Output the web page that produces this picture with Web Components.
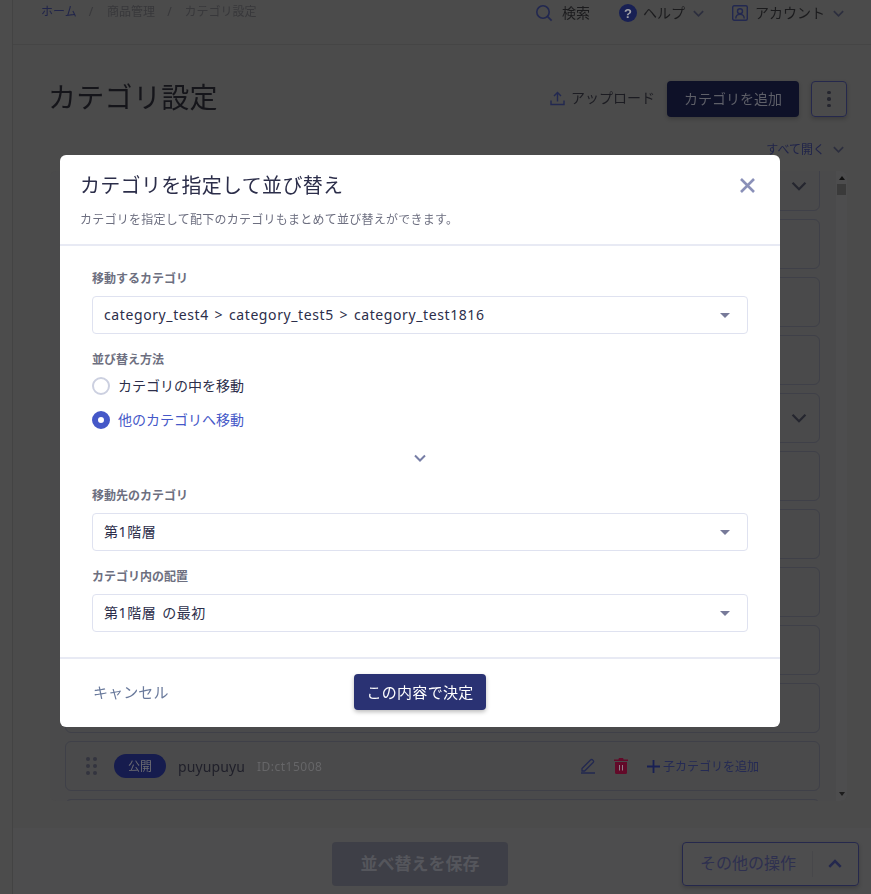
<!DOCTYPE html>
<html lang="ja"><head><meta charset="utf-8"><title>カテゴリ設定</title>
<style>
html,body{margin:0;height:100%;overflow:hidden}
body{font-family:"Noto Sans","Noto Sans CJK JP",sans-serif;background:#4b4b4b;color:#2c2e4a}
</style></head><body>
<app-shell></app-shell>
<sort-modal></sort-modal>
<script>
const chev=(s=14,c='currentColor',w=1.8)=>`<svg width="${s}" height="${s}" viewBox="0 0 14 14" fill="none" stroke="${c}" stroke-width="${w}"><path d="M2 4.5l5 5 5-5"/></svg>`;
function def(name,css,html){
  customElements.define(name,class extends HTMLElement{
    connectedCallback(){
      if(this.shadowRoot)return;
      const r=this.attachShadow({mode:'open'});
      r.innerHTML=`<style>${css}</style>`+(typeof html==='function'?html(this):html);
    }
  });
}
def('top-bar',`:host{display:flex;justify-content:space-between;align-items:flex-start;height:45px;box-sizing:border-box;border-bottom:1px solid #454545;padding:1px 26px 0 28px;font-size:12px;line-height:20px;color:#38383b}
.crumb{display:flex;margin-top:1px}.crumb .s{margin:0 14px 0 12px}.crumb .s2{margin-right:13px}.home{color:#20244a}
.r{display:flex;align-items:center;font-size:14px;color:#1b1b1d;height:24px}
.i{display:flex;align-items:center}
svg{display:block}`,`
<div class="crumb"><span class="home">ホーム</span><span class="s">/</span><span>商品管理</span><span class="s s2">/</span><span>カテゴリ設定</span></div>
<div class="r">
<span class="i" style="gap:9px;margin-right:29px"><svg width="18" height="18" viewBox="0 0 18 18" fill="none" stroke="#222850" stroke-width="1.6"><circle cx="8" cy="8" r="6.2"/><path d="M12.6 12.6l4 4"/></svg>検索</span>
<span class="i" style="gap:6px;margin-right:27px"><svg width="18" height="18" viewBox="0 0 18 18"><circle cx="9" cy="9" r="9" fill="#182054"/><text x="9" y="13.500" text-anchor="middle" font-size="13" font-weight="700" font-family="Liberation Sans" fill="#a0a0a6">?</text></svg>ヘルプ<span style="margin-left:1px;color:#2c2e3e">${chev(13)}</span></span>
<span class="i" style="gap:7px"><svg width="16" height="16" viewBox="0 0 16 16" fill="none" stroke="#222850" stroke-width="1.400"><rect x=".7" y=".7" width="14.600" height="14.600" rx="1.500"/><circle cx="8" cy="6.300" r="2.500"/><path d="M3.800 13.500c0-5.500 8.400-5.500 8.400 0"/></svg>アカウント<span style="color:#2c2e3e">${chev(13)}</span></span>
</div>`);
def('page-head',`:host{display:flex;align-items:center;height:36px;margin:36px 24px 0 35px;color:#1c1c22}
h1{margin:0;font-size:28px;font-weight:400;line-height:32px;color:#15151a;flex:1;align-self:flex-start;letter-spacing:.3px}
.up{display:flex;align-items:center;gap:6px;font-size:14px;margin-right:12px;line-height:20px;padding-bottom:2px}
.add{width:132px;height:36px;box-sizing:border-box;background:#0e1128;color:#5e5f68;border-radius:4px;font-size:14px;display:flex;align-items:center;justify-content:center;box-shadow:0 2px 4px #0003;padding-bottom:2px}
.more{width:36px;height:36px;box-sizing:border-box;margin-left:12px;border:1px solid #25284c;border-radius:4px;display:flex;flex-direction:column;gap:3px;align-items:center;justify-content:center;box-shadow:0 2px 4px #0003}
.more i{width:3.500px;height:3.500px;border-radius:50%;background:#25262f}`,`
<h1>カテゴリ設定</h1>
<span class="up"><svg width="15" height="15" viewBox="0 0 15 15" fill="none" stroke="#222850" stroke-width="1.400"><path d="M1 9.500v4h13v-4M7.500 10.500V2M4 5l3.500-3.500L11 5"/></svg>アップロード</span>
<span class="add">カテゴリを追加</span>
<span class="more"><i></i><i></i><i></i></span>`);
def('open-all',`:host{display:flex;justify-content:flex-end;align-items:center;gap:7px;margin:21px 26px 0 0;height:22px;font-size:12px;color:#20244a}
svg{color:#2c2e3e}`,`すべて開く${chev(13)}`);
def('cat-card',`:host{display:flex;align-items:center;box-sizing:border-box;height:50px;flex:none;border:1px solid #3f4048;border-radius:6px;padding:0 11px 0 20px;margin-bottom:8px;font-size:14px;color:#20202a}
.end{margin-left:auto;color:#25262f;display:flex}`,c=>`<slot></slot>${c.hasAttribute('fold')?`<span class="end">${chev(18,'currentColor',1.700)}</span>`:''}`);
def('cat-row',`:host{display:flex;align-items:center;flex:1}
.d{display:grid;grid-template-columns:4px 4px;gap:3px 3px;margin-right:17px;width:11px}.d i{width:4px;height:4px;border-radius:50%;background:#33343f}
.b{width:52px;height:24px;border-radius:12px;background:#161c4e;color:#6c6c72;font-size:12px;display:flex;align-items:center;justify-content:center;margin-right:12px}
.name{margin-right:12px;color:#20202a;letter-spacing:.1px}.id{font-size:12px;color:#666668;letter-spacing:.5px}
.act{margin-left:auto;display:flex;align-items:center;margin-right:49px}
.add{display:flex;align-items:center;gap:3px;font-size:12px;color:#242a54}`,`
<span class="d"><i></i><i></i><i></i><i></i><i></i><i></i></span><span class="b">公開</span><span class="name">puyupuyu</span><span class="id">ID:ct15008</span>
<span class="act">
<svg width="16" height="16" viewBox="0 0 16 16" fill="none" stroke="#222850" stroke-width="1.300" style="margin-right:18px"><path d="M1 15h14M2 10.500L10.500 2a1.500 1.500 0 0 1 2.200 0l.4.4a1.500 1.500 0 0 1 0 2.100L4.600 13H2z"/></svg>
<svg width="14" height="16" viewBox="0 0 14 16" style="margin-right:19px"><path fill="#620a29" d="M5 0h4l.6 1.500H14V3H0V1.500h4.400zM1 4h12v10.500a1.500 1.500 0 0 1-1.500 1.500h-9A1.500 1.500 0 0 1 1 14.500z"/><path stroke="#90808a" stroke-width="1" d="M5.500 7v5.500M8.500 7v5.500"/></svg>
<span class="add"><svg width="13" height="13" viewBox="0 0 13 13" stroke="#182054" stroke-width="1.800"><path d="M6.500 0v13M0 6.500h13"/></svg>子カテゴリを追加</span>
</span>`);
def('cat-list',`:host{display:block;margin:11px 24px 0 37px;height:630px;overflow:hidden;position:relative;background:#4a4a4b;border-radius:6px}
.in{display:flex;flex-direction:column;margin:-10px 27px 0 15px}
.sb{position:absolute;right:0;top:0;bottom:0;width:11px;background:#4d4d4e}
.th{position:absolute;left:1px;right:1px;top:13px;height:11px;background:#3a3a3a}
.u,.dn{position:absolute;left:3px;width:0;border:3px solid transparent}
.u{top:2px;border-bottom:4px solid #111}.dn{bottom:2px;border-top:4px solid #1c1c1c}`,`
<div class="in"><cat-card fold></cat-card><cat-card></cat-card><cat-card></cat-card><cat-card></cat-card><cat-card fold></cat-card><cat-card></cat-card><cat-card></cat-card><cat-card></cat-card><cat-card></cat-card><cat-card></cat-card><cat-card><cat-row></cat-row></cat-card><cat-card></cat-card></div>
<div class="sb"><span class="u"></span><span class="th"></span><span class="dn"></span></div>`);
def('foot-bar',`:host{position:absolute;left:13px;right:0;bottom:0;height:66px;box-sizing:border-box;background:#4d4d4e;display:flex;align-items:center;padding:5px 12px 0 319px}
.save{width:176px;height:44px;box-sizing:border-box;padding-bottom:2px;background:#3e3f47;border-radius:4px;color:#55565c;font-size:17px;font-weight:700;display:flex;align-items:center;justify-content:center;margin-right:174px}
.other{width:177px;height:44px;box-sizing:border-box;border:1px solid #25284c;border-radius:4px;color:#2e3050;font-size:16px;display:flex;align-items:center;box-shadow:0 2px 4px #0003}
.t{padding:0 16px 2px 17px;border-right:1px solid #47474a;line-height:24px;margin-right:14px;flex:none}`,`
<span class="save">並べ替えを保存</span>
<span class="other"><span class="t">その他の操作</span>${chev(16,'#24284e',2.200).replace('M2 4.5l5 5 5-5','M2 9.500l5-5 5 5')}</span>`);
def('app-shell',`:host{display:block;position:fixed;inset:0;overflow:hidden}
.side{position:absolute;left:0;top:0;bottom:0;width:12px;border-right:1px solid #434343;background:#4c4c4c}
main{margin-left:13px}`,`
<div class="side"></div>
<main><top-bar></top-bar><page-head></page-head><open-all></open-all><cat-list></cat-list></main>
<foot-bar></foot-bar>`);
def('form-select',`:host{display:flex;align-items:center;height:38px;box-sizing:border-box;border:1px solid #dfe2f0;border-radius:4px;padding:0 17px 2px 11px;font-size:14px;color:#2c2e4a;letter-spacing:.6px;word-spacing:1.5px}
i{margin-left:auto;width:0;border:5px solid transparent;border-top:5px solid #777a99;border-bottom:0;position:relative;top:1px}`,`<slot></slot><i></i>`);
def('form-label',`:host{display:block;font-size:12px;font-weight:700;line-height:18px;color:#6d6f80}`,`<slot></slot>`);
def('radio-opt',`:host{display:flex;align-items:center;gap:8px;font-size:14px;line-height:20px;color:#2c2e4a}
:host([on]){color:#4558c8}
i{width:18px;height:18px;border-radius:50%;box-sizing:border-box;border:2px solid #ccd0e0;flex:none}
:host([on]) i{border:6px solid #4558c8}`,`<i></i><slot></slot>`);
def('sort-modal',`:host{position:fixed;inset:0;display:flex;align-items:flex-start;padding:155px 0 0 60px;box-sizing:border-box}
.m{width:720px;height:572px;background:#fff;border-radius:6px;display:flex;flex-direction:column;box-sizing:border-box}
header{position:relative;height:91px;box-sizing:border-box;border-bottom:2px solid #e8eaf4;padding:17px 20px 0}
h2{margin:0;font-size:20px;font-weight:400;line-height:28px;color:#2c2e4a;letter-spacing:.3px}
p{margin:11px 0 0;font-size:12px;line-height:18px;color:#6d6f80;letter-spacing:.25px}
.x{position:absolute;right:25px;top:23px}
.b{padding:24px 32px 0;flex:1}
.s{margin-top:8px}
.radios{display:flex;flex-direction:column;gap:14px;margin-top:7px}
.arr{display:flex;justify-content:center;margin:21px 0 22px;color:#777ea6}
footer{height:70px;box-sizing:border-box;border-top:2px solid #e8eaf4;display:flex;align-items:center;padding:0 33px 4px;position:relative}
.c{font-size:15px;color:#6a7a9c;letter-spacing:.1px}
.ok{position:absolute;left:294px;top:15px;width:132px;height:36px;background:#2a3273;color:#fff;font-size:15px;letter-spacing:.3px;border-radius:4px;display:flex;align-items:center;justify-content:center;box-shadow:0 2px 4px #0004;padding-bottom:2px;box-sizing:border-box}
.g{margin-top:17px}`,`
<div class="m">
<header><h2>カテゴリを指定して並び替え</h2><p>カテゴリを指定して配下のカテゴリもまとめて並び替えができます。</p>
<svg class="x" width="15" height="15" viewBox="0 0 15 15" stroke="#8a90b8" stroke-width="2.600"><path d="M1 1l13 13M14 1L1 14"/></svg></header>
<div class="b">
<form-label>移動するカテゴリ</form-label>
<form-select class="s">category_test4 &gt; category_test5 &gt; category_test1816</form-select>
<form-label class="g">並び替え方法</form-label>
<div class="radios"><radio-opt>カテゴリの中を移動</radio-opt><radio-opt on>他のカテゴリへ移動</radio-opt></div>
<div class="arr">${chev(14,'currentColor',2)}</div>
<form-label>移動先のカテゴリ</form-label>
<form-select class="s">第1階層</form-select>
<form-label class="g">カテゴリ内の配置</form-label>
<form-select class="s">第1階層 の最初</form-select>
</div>
<footer><span class="c">キャンセル</span><span class="ok">この内容で決定</span></footer>
</div>`);
</script>
</body></html>
